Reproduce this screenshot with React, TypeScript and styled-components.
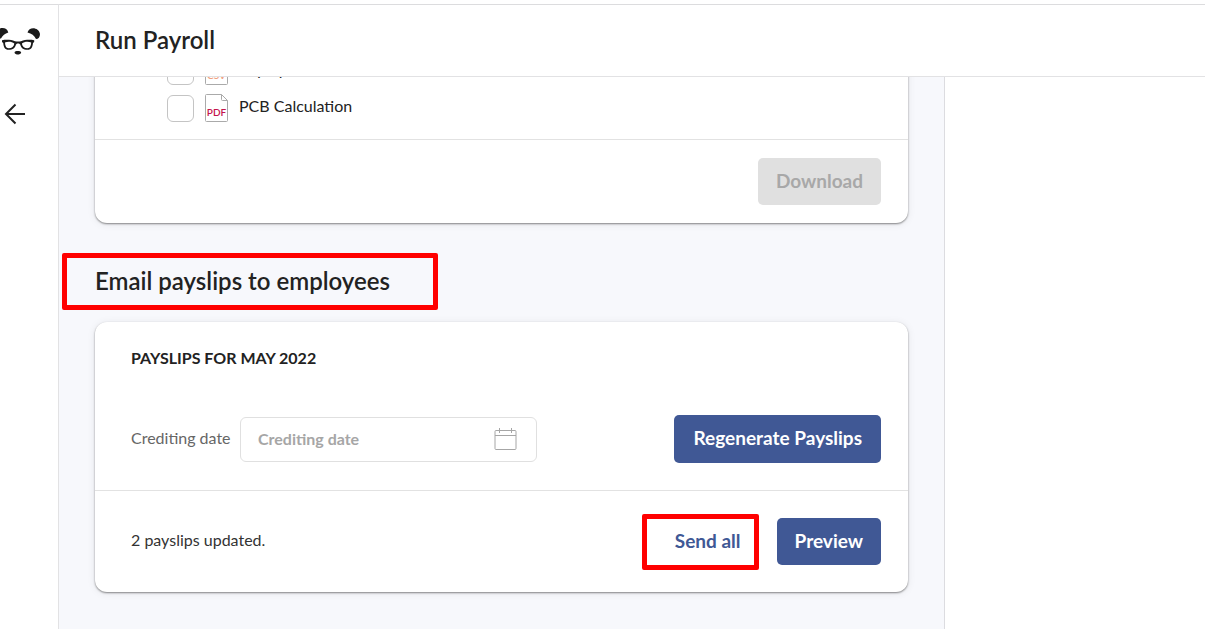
import React from "react";
import styled, { createGlobalStyle } from "styled-components";

const GlobalStyle = createGlobalStyle`
  *, *::before, *::after { box-sizing: border-box; }
  body { margin: 0; background: #fff; color: #222; font-family: Lato, "Open Sans", sans-serif; font-size: 16px; }
  h1, h2, h3, p { margin: 0; }
  button, input { font-family: inherit; }
`;

const Shell = styled.div`
  display: flex;
  height: 100vh;
  padding-top: 4px;
`;

const Sidebar = styled.nav`
  flex: 0 0 59px;
  border-top: 1px solid #dcdcde;
  border-right: 1px solid #e2e2e4;
  display: flex;
  flex-direction: column;
  align-items: flex-start;
  gap: 46px;
  padding-top: 22px;
`;

const SideLink = styled.a`
  display: block;
  color: #222;
  line-height: 0;
`;

const BackButton = styled.button`
  border: 0;
  padding: 0 0 0 4px;
  background: none;
  color: #222;
  line-height: 0;
`;

const Main = styled.div`
  flex: 1;
  min-width: 0;
  display: flex;
  flex-direction: column;
`;

const Header = styled.header`
  flex: 0 0 73px;
  border-top: 1px solid #dcdcde;
  border-bottom: 1px solid #e2e2e4;
  display: flex;
  align-items: center;
  padding: 0 0 2px 36px;
`;

const Title = styled.h1`
  font-size: 24px;
  line-height: 32px;
  font-weight: 600;
`;

const Columns = styled.div`
  flex: 1;
  min-height: 0;
  display: flex;
`;

const Content = styled.main`
  flex: 0 1 886px;
  overflow: hidden;
  background: #f7f8fc;
  border-right: 1px solid #dcdce0;
  padding: 0 36px;
`;

const Card = styled.section`
  background: #fff;
  border-radius: 12px;
  box-shadow: 0 1px 2px rgba(0, 0, 0, 0.45), 0 1px 8px rgba(0, 0, 0, 0.08);
`;

const ScrolledCard = styled(Card)`
  margin-top: -56px;
  padding-top: 36px;
`;

const FileList = styled.ul`
  list-style: none;
  margin: 0;
  padding: 0 27px 17px 72px;
  display: grid;
  gap: 9px;
`;

const FileLabel = styled.label`
  display: flex;
  align-items: center;
  height: 28px;
`;

const Check = styled.input`
  appearance: none;
  width: 27px;
  height: 27px;
  margin: 0 11px 0 0;
  border: 1px solid #c4c4c4;
  border-radius: 6px;
  background: #fff;
`;

const FileName = styled.span`
  margin-left: 11px;
  line-height: 24px;
  padding-bottom: 4px;
`;

const Footer = styled.footer<{ $tall?: boolean }>`
  border-top: 1px solid #e2e2e2;
  display: flex;
  align-items: center;
  gap: 18px;
  min-height: ${(p) => (p.$tall ? 102 : 84)}px;
  padding: 0 27px 0 36px;
`;

const Note = styled.p`
  line-height: 24px;
  padding-bottom: 4px;
  color: #333;
`;

const Button = styled.button<{ $kind?: "primary" | "disabled" | "text"; $large?: boolean }>`
  height: ${(p) => (p.$large ? 48 : 47)}px;
  border: 0;
  border-radius: 5px;
  padding: 0 ${(p) => (p.$large ? 19 : 18)}px 2px;
  font-size: 19px;
  line-height: 24px;
  font-weight: 700;
  white-space: nowrap;
  color: ${(p) => (p.$kind === "disabled" ? "#a8a8a8" : p.$kind === "text" ? "#405895" : "#fff")};
  background: ${(p) => (p.$kind === "disabled" ? "#e0e0e0" : p.$kind === "text" ? "transparent" : "#405895")};
`;

const Spacer = styled.span`
  flex: 1;
`;

const Marker = styled.div`
  border: 5px solid #f00;
  border-radius: 2px;
  display: flex;
  align-items: center;
`;

const HeadingMarker = styled(Marker)`
  width: 376px;
  height: 57px;
  margin: 30px 0 12px -33px;
  padding: 0 0 2px 28px;
`;

const SendMarker = styled(Marker)`
  width: 117px;
  height: 56px;
  justify-content: flex-end;
  & > button { padding: 0 13px 2px; }
`;

const SectionTitle = styled.h2`
  font-size: 24px;
  line-height: 32px;
  font-weight: 600;
  white-space: nowrap;
`;

const CardBody = styled.div`
  padding: 24px 27px 27px 36px;
`;

const CardTitle = styled.h3`
  font-size: 16px;
  line-height: 24px;
  font-weight: 700;
`;

const FormRow = styled.div`
  display: flex;
  align-items: center;
  margin-top: 45px;
`;

const FieldLabel = styled.label`
  flex: 0 0 109px;
  line-height: 24px;
  padding-bottom: 2px;
  color: #666;
`;

const DateField = styled.div`
  flex: 0 1 297px;
  height: 45px;
  display: flex;
  align-items: center;
  border: 1px solid #e0e0e0;
  border-radius: 6px;
  padding: 0 19px 0 17px;
`;

const DateInput = styled.input`
  flex: 1;
  min-width: 0;
  border: 0;
  outline: 0;
  padding: 0 0 2px;
  background: none;
  font-size: 16px;
  font-weight: 700;
  &::placeholder { color: #a6a6a6; opacity: 1; }
`;

const PandaLogo = () => (
  <svg width="41" height="30" viewBox="0 0 41 30" fill="#1a1a1a" aria-hidden="true">
    <path d="M-4 6C-3 0 7 -1 8.300 5.500C5 6.500 2.500 8.500 1 11.500C-2 12 -4 10 -4 6Z" />
    <path d="M27.500 5.500C29 -1 39 0 40 7C40 10 38.500 12 36 12C34.500 8.500 31.500 6.500 27.500 5.500Z" />
    <path
      fillRule="evenodd"
      d="M2 13.200C6 12.600 11 12.600 15 14.200Q18 14.800 21 14.200C25 12.600 30 12.600 34.200 13.200V15L33 16C32.500 20 31.500 22.800 27.500 22.800C23 22.800 21.200 21 20.200 17.500C19.500 16 16.700 16 16 17.500C15 21 13.200 22.800 8.700 22.800C4.700 22.800 3.700 20 3.200 16L2 15ZM5 15.500C5.200 18.500 6 21.200 8.700 21.200C12 21.200 14 19.500 14.300 16.500C12 14.300 7.500 14.200 5 15.500ZM31.200 15.500C28.700 14.200 24.200 14.300 21.900 16.500C22.200 19.500 24.200 21.200 27.500 21.200C30.200 21.200 31 18.500 31.200 15.500Z"
    />
    <path d="M14.500 25.200C15 23.600 20.500 23.600 21.200 25.200C21 27 19 27.600 17.900 27.600C16.500 27.600 14.700 27 14.500 25.200Z" />
  </svg>
);

const BackArrow = () => (
  <svg width="22" height="22" viewBox="0 0 22 22" fill="none" stroke="currentColor" strokeWidth="2" aria-hidden="true">
    <path d="M21 11H2.500M11.500 1.500L2 11L11.500 20.500" />
  </svg>
);

const FileIcon = ({ kind, color }: { kind: string; color: string }) => (
  <svg width="23" height="28" viewBox="0 0 23 28" aria-hidden="true">
    <path d="M1.5.5H16.5L22.5 6.5V26.5Q22.5 27.5 21.5 27.5H1.5Q.5 27.5 .5 26.5V1.5Q.5.5 1.5.5ZM16.5.5V5.5Q16.5 6.5 17.5 6.5H22.5" fill="#fff" stroke="#aaa" />
    <text x="11.5" y="22" textAnchor="middle" fontSize="10" fontWeight="600" fill={color}>{kind}</text>
  </svg>
);

const CalendarIcon = () => (
  <svg width="23" height="23" viewBox="0 0 23 23" fill="none" stroke="#a6a6a6" aria-hidden="true">
    <rect x="1" y="2.5" width="21" height="19" rx="1" />
    <path d="M1 7.5H22M5.500 0V5M17.500 0V5" />
  </svg>
);

export default function App() {
  return (
    <>
      <GlobalStyle />
      <Shell>
        <Sidebar>
          <SideLink href="#" aria-label="Home"><PandaLogo /></SideLink>
          <BackButton aria-label="Back"><BackArrow /></BackButton>
        </Sidebar>
        <Main>
          <Header><Title>Run Payroll</Title></Header>
          <Columns>
            <Content>
              <ScrolledCard>
                <FileList>
                  <li><FileLabel><Check type="checkbox" /><FileIcon kind="CSV" color="#f0a080" /><FileName>Payslip</FileName></FileLabel></li>
                  <li><FileLabel><Check type="checkbox" /><FileIcon kind="PDF" color="#c4144c" /><FileName>PCB Calculation</FileName></FileLabel></li>
                </FileList>
                <Footer><Spacer /><Button $kind="disabled" disabled>Download</Button></Footer>
              </ScrolledCard>
              <HeadingMarker><SectionTitle>Email payslips to employees</SectionTitle></HeadingMarker>
              <Card>
                <CardBody>
                  <CardTitle>PAYSLIPS FOR MAY 2022</CardTitle>
                  <FormRow>
                    <FieldLabel htmlFor="crediting">Crediting date</FieldLabel>
                    <DateField><DateInput id="crediting" placeholder="Crediting date" /><CalendarIcon /></DateField>
                    <Spacer />
                    <Button $large>Regenerate Payslips</Button>
                  </FormRow>
                </CardBody>
                <Footer $tall>
                  <Note>2 payslips updated.</Note>
                  <Spacer />
                  <SendMarker><Button $kind="text">Send all</Button></SendMarker>
                  <Button>Preview</Button>
                </Footer>
              </Card>
            </Content>
          </Columns>
        </Main>
      </Shell>
    </>
  );
}
